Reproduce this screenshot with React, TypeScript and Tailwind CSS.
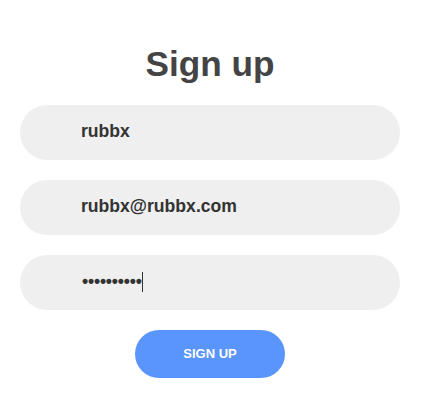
import React from "react";

export default function App() {
  const font = { fontFamily: '"Liberation Sans", Arial, sans-serif' };
  return (
    <div className="w-[431px] h-[406px] bg-white" style={font}>
      <div className="ml-5 w-[380px] pt-[44px] flex flex-col items-center">
        <h1 className="text-[35.2px] leading-[40px] font-bold text-[#444444] mb-[21px]">Sign up</h1>
        <div className="w-full flex flex-col gap-5">
          <input
            readOnly
            value="rubbx"
            className="w-full h-[55px] rounded-full bg-[#efefef] pl-[61px] pb-[2px] text-[17.6px] font-bold text-[#333333] outline-none border-0"
          />
          <input
            readOnly
            value="rubbx@rubbx.com"
            className="w-full h-[55px] rounded-full bg-[#efefef] pl-[61px] pb-[2px] text-[17.6px] font-bold text-[#333333] outline-none border-0"
          />
          <div className="w-full h-[55px] rounded-full bg-[#efefef] pl-[62px] pb-[2px] flex items-center text-[17.6px] font-bold text-[#333333]">
            <span className="tracking-[-0.2px]">••••••••••</span>
            <span className="w-px h-[20px] bg-[#333333]" />
          </div>
        </div>
        <button className="mt-5 w-[150px] h-[48px] rounded-full bg-[#5995fd] text-white text-[13px] font-bold uppercase">
          Sign up
        </button>
      </div>
    </div>
  );
}
